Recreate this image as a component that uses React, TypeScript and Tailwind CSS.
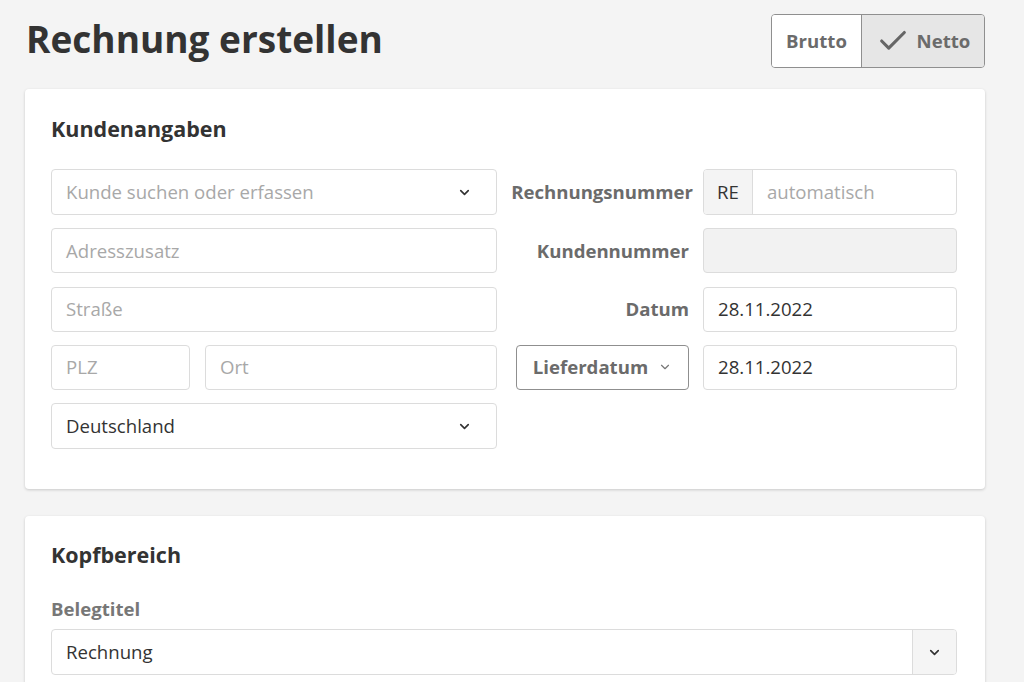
import React from 'react';
import { ChevronDown, Check } from 'lucide-react';

const font = { fontFamily: '"Open Sans", "Noto Sans", sans-serif' };

function TextInput({ placeholder, value, className = '' }: { placeholder?: string; value?: string; className?: string }) {
  return (
    <div className={`h-[45px] border border-[#dcdcdc] rounded-[4px] bg-white flex items-center px-[14px] text-[18.6px] ${className}`}>
      {value ? <span className="text-[#333]">{value}</span> : <span className="text-[#a8a8a8]">{placeholder}</span>}
    </div>
  );
}

function SelectInput({ placeholder, value }: { placeholder?: string; value?: string }) {
  return (
    <div className="h-[46px] border border-[#dcdcdc] rounded-[4px] bg-white flex items-center justify-between pl-[14px] pr-[24px] text-[18.6px]">
      {value ? <span className="text-[#333]">{value}</span> : <span className="text-[#a8a8a8]">{placeholder}</span>}
      <ChevronDown className="w-[15px] h-[15px] text-[#333]" strokeWidth={2.6} />
    </div>
  );
}

function Label({ children, className = '' }: { children: React.ReactNode; className?: string }) {
  return <div className={`flex-1 text-right text-[18.6px] font-bold text-[#6b6b6b] ${className}`}>{children}</div>;
}

export default function App() {
  return (
    <div className="min-h-screen bg-[#f4f4f4] pl-[25px] pr-[39px] pt-[14px] pb-10" style={font}>
      <div className="flex items-start justify-between">
        <h1 className="text-[37px] font-bold text-[#333] leading-none mt-[6px] ml-[1px]">Rechnung erstellen</h1>
        <div className="flex h-[54px] border border-[#8f8f8f] rounded-[4px] overflow-hidden">
          <div className="w-[90px] bg-white flex items-center justify-center text-[18.6px] font-bold text-[#6b6b6b] border-r border-[#8f8f8f]">
            Brutto
          </div>
          <div className="w-[122px] bg-[#e6e6e6] flex items-center justify-center gap-[7px] text-[18.6px] font-bold text-[#6b6b6b]">
            <Check className="w-[34px] h-[34px] text-[#666]" strokeWidth={2.2} />
            Netto
          </div>
        </div>
      </div>

      <div className="mt-[21px] bg-white rounded-[4px] shadow-[0_1px_3px_rgba(0,0,0,0.18)] pl-[26px] pr-[28px] pt-[28px] pb-[40px]">
        <h2 className="text-[21.5px] font-bold text-[#333] leading-[24px]">Kundenangaben</h2>
        <div className="mt-[28px] flex gap-[14px]">
          <div className="w-[446px] flex flex-col gap-[13.25px]">
            <SelectInput placeholder="Kunde suchen oder erfassen" />
            <TextInput placeholder="Adresszusatz" />
            <TextInput placeholder="Straße" />
            <div className="flex gap-[15px]">
              <TextInput placeholder="PLZ" className="w-[139px]" />
              <TextInput placeholder="Ort" className="flex-1" />
            </div>
            <SelectInput value="Deutschland" />
          </div>
          <div className="flex-1 flex flex-col gap-[13.25px]">
            <div className="flex items-center gap-[10px]">
              <Label>Rechnungsnummer</Label>
              <div className="w-[254px] h-[46px] border border-[#dcdcdc] rounded-[4px] flex overflow-hidden text-[18.6px]">
                <div className="w-[49px] bg-[#f4f4f4] border-r border-[#dcdcdc] flex items-center justify-center text-[#333]">RE</div>
                <div className="flex-1 flex items-center px-[14px] text-[#a8a8a8]">automatisch</div>
              </div>
            </div>
            <div className="flex items-center gap-[10px]">
              <Label className="pr-[4px]">Kundennummer</Label>
              <div className="w-[254px] h-[45px] border border-[#dcdcdc] rounded-[4px] bg-[#f2f2f2]" />
            </div>
            <div className="flex items-center gap-[10px]">
              <Label className="pr-[4px]">Datum</Label>
              <TextInput value="28.11.2022" className="w-[254px]" />
            </div>
            <div className="flex items-center gap-[14px]">
              <div className="flex-1 flex justify-start pl-[5px]">
                <div className="w-[173px] h-[45px] border border-[#8f8f8f] rounded-[4px] flex items-center justify-center gap-[10px] text-[18.6px] font-bold text-[#6b6b6b]">
                  Lieferdatum
                  <ChevronDown className="w-[14px] h-[14px] text-[#777]" strokeWidth={2} />
                </div>
              </div>
              <TextInput value="28.11.2022" className="w-[254px]" />
            </div>
          </div>
        </div>
      </div>

      <div className="mt-[27px] bg-white rounded-[4px] shadow-[0_1px_3px_rgba(0,0,0,0.18)] pl-[26px] pr-[28px] pt-[27px] pb-[40px]">
        <h2 className="text-[21.5px] font-bold text-[#333] leading-[24px]">Kopfbereich</h2>
        <div className="mt-[30px] text-[18.6px] font-bold text-[#777] leading-[24px]">Belegtitel</div>
        <div className="mt-[8px] h-[46px] border border-[#dcdcdc] rounded-[4px] flex overflow-hidden text-[18.6px]">
          <div className="flex-1 flex items-center px-[14px] text-[#333]">Rechnung</div>
          <div className="w-[44px] bg-[#f5f5f5] border-l border-[#dcdcdc] flex items-center justify-center">
            <ChevronDown className="w-[15px] h-[15px] text-[#333]" strokeWidth={2.6} />
          </div>
        </div>
      </div>
    </div>
  );
}
